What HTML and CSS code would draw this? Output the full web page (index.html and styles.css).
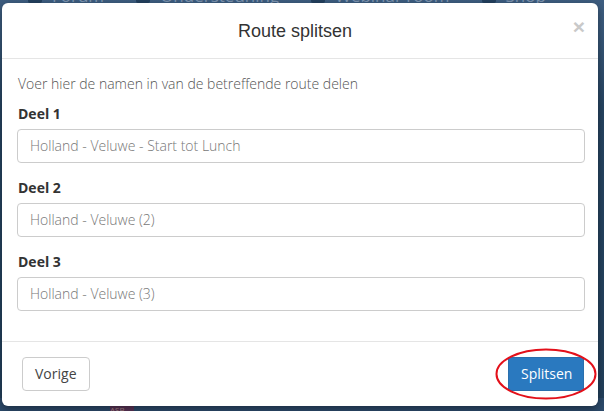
FILE: index.html
```html
<!DOCTYPE html>
<html lang="nl">
<head>
<meta charset="utf-8">
<title>Route splitsen</title>
<link rel="stylesheet" href="styles.css">
</head>
<body>
<div class="page">
  <nav class="nav">
    <span class="nav-item"><span class="nav-ico"></span>Forum</span>
    <span class="nav-item"><span class="nav-ico"></span>Ondersteuning</span>
    <span class="nav-item"><span class="nav-ico"></span>Webinar room</span>
    <span class="nav-item"><span class="nav-ico"></span>Shop</span>
  </nav>
  <div class="badge">ASB</div>
</div>

<div class="modal">
  <div class="modal-header">
    <h4 class="modal-title">Route splitsen</h4>
    <span class="close">×</span>
  </div>
  <div class="modal-body">
    <p class="intro">Voer hier de namen in van de betreffende route delen</p>
    <div class="form-group">
      <label class="label">Deel 1</label>
      <div class="input">Holland - Veluwe - Start tot Lunch</div>
    </div>
    <div class="form-group">
      <label class="label">Deel 2</label>
      <div class="input">Holland - Veluwe (2)</div>
    </div>
    <div class="form-group">
      <label class="label">Deel 3</label>
      <div class="input">Holland - Veluwe (3)</div>
    </div>
  </div>
  <div class="modal-footer">
    <button class="btn btn-default">Vorige</button>
    <span class="btn-wrap">
      <button class="btn btn-primary">Splitsen</button>
      <svg class="ring" width="104" height="54" viewBox="0 0 104 54"><ellipse cx="52" cy="27" rx="49.5" ry="24.5" fill="none" stroke="#e3101a" stroke-width="2"/></svg>
    </span>
  </div>
</div>
</body>
</html>
```

FILE: styles.css
```css
* { box-sizing: border-box; }
html, body { margin: 0; padding: 0; }
body {
  width: 604px;
  height: 411px;
  overflow: hidden;
  position: relative;
  background: #2c4a6b;
  font-family: "Open Sans", "Liberation Sans", sans-serif;
  font-size: 14px;
  color: #333;
}
.page {
  height: 411px;
  background: linear-gradient(180deg, #3f5f82 0px, #3a5a7c 40px, #264461 120px, #23405c 411px);
}
.nav {
  display: flex;
  gap: 32px;
  padding-left: 28px;
  margin-top: -13px;
  font-size: 17px;
  color: #7f96b2;
  line-height: 18px;
}
.nav-item { display: flex; gap: 10px; align-items: center; }
.nav-ico { width: 14px; height: 14px; background: #23405e; border-radius: 2px; }
.badge {
  position: absolute;
  left: 110px;
  top: 404px;
  width: 24px;
  height: 10px;
  background: #5a3457;
  color: #a88;
  font-size: 8px;
}

.modal {
  position: absolute;
  left: 2px;
  top: 3px;
  width: 596px;
  height: 403px;
  background: #fff;
  border-radius: 6px;
  box-shadow: 0 3px 9px rgba(0,0,0,.4);
}
.modal-header {
  position: relative;
  height: 56px;
  border-bottom: 1px solid #e5e5e5;
  display: flex;
  align-items: center;
  justify-content: center;
}
.modal-title {
  margin: 0;
  font-family: "Liberation Sans", Arial, sans-serif;
  font-weight: normal;
  font-size: 18px;
  color: #333;
  transform: translateX(-5px);
  padding-top: 1px;
}
.close {
  position: absolute;
  right: 13px;
  top: 13px;
  font-family: "Liberation Sans", Arial, sans-serif;
  font-size: 21px;
  font-weight: bold;
  line-height: 1;
  color: #c9c9c9;
}
.modal-body {
  padding: 15px 13px 15px 15px;
}
.intro {
  margin: 0 0 10px;
  line-height: 20px;
  color: #555;
  font-weight: 300;
  padding-left: 1px;
}
.form-group { margin-bottom: 15px; }
.label {
  display: block;
  font-weight: bold;
  line-height: 20px;
  margin-bottom: 5px;
  color: #333;
  padding-left: 1px;
}
.input {
  height: 34px;
  width: 568px;
  border: 1px solid #ccc;
  border-radius: 4px;
  padding: 6px 12px;
  line-height: 20px;
  font-weight: 300;
  color: #777;
}
.modal-footer {
  border-top: 1px solid #e5e5e5;
  padding: 15px 14px 15px 20px;
  display: flex;
  justify-content: space-between;
  align-items: center;
}
.btn {
  height: 34px;
  padding: 6px 12px;
  font-family: "Open Sans", "Liberation Sans", sans-serif;
  font-size: 14px;
  line-height: 20px;
  border-radius: 4px;
  border: 1px solid #ccc;
  background: #fff;
  color: #444;
}
.btn-primary {
  background: #2a79bf;
  border-color: #2a6fad;
  color: #fff;
  width: 76px;
  border-radius: 2px;
}
.btn-wrap { position: relative; display: inline-block; }
.ring {
  position: absolute;
  left: -14px;
  top: -10px;
}
```
